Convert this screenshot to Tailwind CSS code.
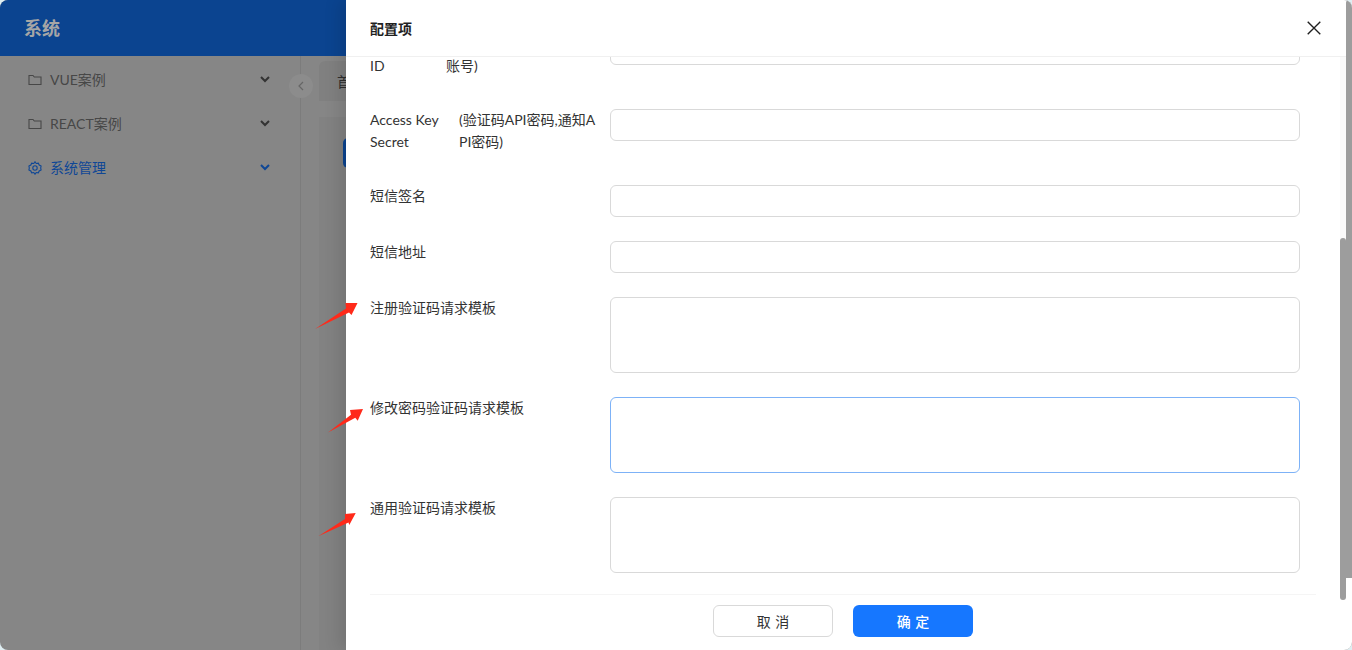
<!DOCTYPE html>
<html lang="zh-CN">
  <head>
    <meta charset="UTF-8" />
    <title>配置项</title>
    <script src="https://cdn.jsdelivr.net/npm/@tailwindcss/browser@4"></script>
  </head>
  <body class="bg-[#dfeef2] overflow-hidden font-['Lato','Noto_Sans_CJK_SC',sans-serif]">
    <div class="relative flex h-[650px] w-[1352px] overflow-hidden rounded-lg bg-[#868686]">
      <!-- Page behind the overlay -->
      <div class="flex w-[346px] shrink-0 flex-col">
        <header class="flex h-[56px] shrink-0 items-center bg-[#0b4490] pl-6 text-[18px] font-bold text-[#a6a6a6]">系统</header>
        <div class="flex flex-1">
          <!-- Sidebar -->
          <nav class="relative w-[301px] shrink-0 border-r border-[#7c7c7c] px-[28px] pt-[2px] text-[14px] text-[#474747]">
            <div class="flex h-[44px] items-center">
              <svg class="mr-2 h-[14px] w-[14px]" viewBox="0 0 14 14" fill="none" stroke="currentColor" stroke-width="1.1"><path d="M1 2.500h4l1.300 1.500H13v7.500H1z" /></svg>
              <span class="flex-1 pb-[2px]">VUE案例</span>
              <svg class="mr-[2px] mb-[2px] h-[8px] w-[10px] text-[#333]" viewBox="0 0 10 8" fill="none" stroke="currentColor" stroke-width="2"><path d="M1 2l4 4 4-4" /></svg>
            </div>
            <div class="flex h-[44px] items-center">
              <svg class="mr-2 h-[14px] w-[14px]" viewBox="0 0 14 14" fill="none" stroke="currentColor" stroke-width="1.1"><path d="M1 2.500h4l1.300 1.500H13v7.500H1z" /></svg>
              <span class="flex-1 pb-[2px]">REACT案例</span>
              <svg class="mr-[2px] mb-[2px] h-[8px] w-[10px] text-[#333]" viewBox="0 0 10 8" fill="none" stroke="currentColor" stroke-width="2"><path d="M1 2l4 4 4-4" /></svg>
            </div>
            <div class="flex h-[44px] items-center text-[#0f4796]">
              <svg class="mr-2 h-[14px] w-[14px]" viewBox="0 0 14 14" fill="none" stroke="currentColor" stroke-width="1.1"><path d="M7 .8l1.200 1.700 2.100-.3.900 1.900 1.900.9-.4 2 .4 2-1.900.9-.9 1.900-2.100-.3L7 13.200l-1.200-1.700-2.100.3-.9-1.900-1.900-.9.4-2-.4-2 1.900-.9.9-1.900 2.100.3z" /><circle cx="7" cy="7" r="2.200" /></svg>
              <span class="flex-1 pb-[2px]">系统管理</span>
              <svg class="mr-[2px] mb-[2px] h-[8px] w-[10px]" viewBox="0 0 10 8" fill="none" stroke="currentColor" stroke-width="2"><path d="M1 2l4 4 4-4" /></svg>
            </div>
            <button class="absolute top-[18px] right-[-13px] flex h-[24px] w-[24px] items-center justify-center rounded-full bg-[#8c8c8c] text-[#666]">
              <svg class="h-[10px] w-[6px]" viewBox="0 0 6 10" fill="none" stroke="currentColor" stroke-width="1.2"><path d="M5 1L1 5l4 4" /></svg>
            </button>
          </nav>
          <!-- Content -->
          <main class="flex-1 pt-[5px] pl-[18px]">
            <div class="flex h-[40px] items-center rounded-tl-md bg-[#808080] pl-[18px] text-[14px] text-[#2e2e2e]">首</div>
            <div class="mt-[16px] h-full bg-[#828282] pt-[21px] pl-[24px]">
              <div class="h-[30px] rounded-l-[5px] bg-[#0b4490]"></div>
            </div>
          </main>
        </div>
      </div>

      <!-- Drawer -->
      <section class="flex w-[1006px] shrink-0 flex-col bg-white shadow-[-6px_0_16px_rgba(0,0,0,0.12)]">
        <div class="flex h-[57px] shrink-0 items-center justify-between border-b border-[#f0f0f0] pr-[30px] pl-6">
          <h2 class="text-[14px] font-bold text-[#1f1f1f]">配置项</h2>
          <svg class="h-[16px] w-[16px] text-[#1f1f1f]" viewBox="0 0 14 14" fill="none" stroke="currentColor" stroke-width="1.2"><path d="M1.500 1.500l11 11M12.500 1.500l-11 11" /></svg>
        </div>

        <div class="flex-1 overflow-hidden pr-[6px] pl-6 text-[14px] leading-[22px] text-[#333]">
          <form class="-mt-[24px] flex w-[930px] flex-col gap-6">
            <div class="flex h-[52px]">
              <div class="flex w-[240px] shrink-0">
                <span class="w-[76px] shrink-0">Access Key ID</span>
                <span class="w-[150px]">(验证码API账号,通知API<br />账号)</span>
              </div>
              <input class="h-[32px] w-[690px] rounded-md border border-[#d9d9d9]" />
            </div>
            <div class="flex h-[52px]">
              <div class="flex w-[240px] shrink-0">
                <span class="w-[89px] shrink-0">Access Key Secret</span>
                <span class="w-[137px] break-all">(验证码API密码,通知API密码)</span>
              </div>
              <input class="h-[32px] w-[690px] rounded-md border border-[#d9d9d9]" />
            </div>
            <div class="flex">
              <label class="w-[240px] shrink-0">短信签名</label>
              <input class="h-[32px] w-[690px] rounded-md border border-[#d9d9d9]" />
            </div>
            <div class="flex">
              <label class="w-[240px] shrink-0">短信地址</label>
              <input class="h-[32px] w-[690px] rounded-md border border-[#d9d9d9]" />
            </div>
            <div class="flex">
              <label class="w-[240px] shrink-0">注册验证码请求模板</label>
              <textarea class="h-[76px] w-[690px] resize-none rounded-md border border-[#d9d9d9]"></textarea>
            </div>
            <div class="flex">
              <label class="w-[240px] shrink-0">修改密码验证码请求模板</label>
              <textarea class="h-[76px] w-[690px] resize-none rounded-md border border-[#7db2f7]"></textarea>
            </div>
            <div class="flex">
              <label class="w-[240px] shrink-0">通用验证码请求模板</label>
              <textarea class="h-[76px] w-[690px] resize-none rounded-md border border-[#d9d9d9]"></textarea>
            </div>
          </form>
        </div>

        <footer class="ml-6 flex h-[56px] w-[946px] shrink-0 justify-center gap-5 border-t border-[#f5f5f5] pt-[10px] text-[14px]">
          <button class="h-[32px] w-[120px] rounded-md border border-[#d9d9d9] bg-white text-[#333] [word-spacing:1px]">取 消</button>
          <button class="h-[32px] w-[120px] rounded-md bg-[#1677ff] font-medium text-white [word-spacing:1px]">确 定</button>
        </footer>
      </section>

      <!-- Scrollbars -->
      <div class="absolute top-[57px] right-[6px] bottom-[50px] w-[6px] bg-[#fafafa]"></div>
      <div class="absolute top-[238px] right-[6px] h-[362px] w-[6px] rounded-t-[3px] rounded-b-[3px] bg-[#9d9d9d]"></div>
      <div class="absolute top-0 right-0 h-[578px] w-[6px] rounded-t-[3px] bg-[#9d9d9d]"></div>

      <!-- Red annotation arrows -->
      <svg class="pointer-events-none absolute top-0 left-0 h-[650px] w-[1352px]" viewBox="0 0 1352 650" fill="#ff2a1a">
        <path d="M315 329L346 308.500L345.500 303L357.500 303L351.500 315L349 312.500z" />
        <path d="M328 432.500L351 414.700L350 410L363 409L357.700 420.700L355.300 417.700z" />
        <path d="M318.300 536.300L345 519L345 514L355.700 513L349.300 525L348.500 522.500z" />
      </svg>
    </div>
  </body>
</html>
